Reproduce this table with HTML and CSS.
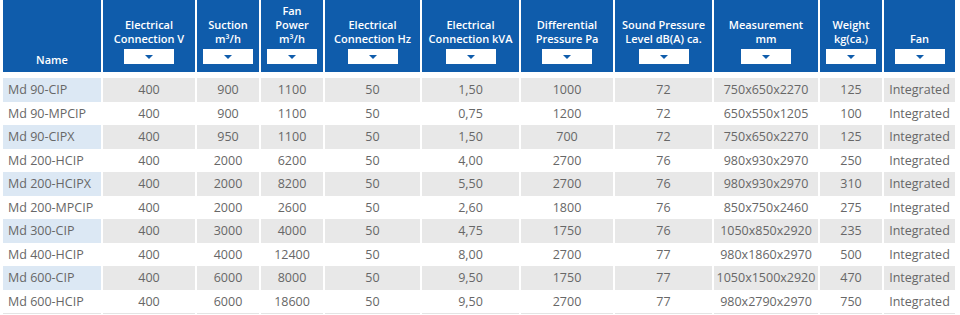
FILE: index.html
```html
<!DOCTYPE html>
<html lang="en">
<head>
<meta charset="utf-8">
<title>Product table</title>
<link rel="stylesheet" href="styles.css">
</head>
<body>
<div class="wrap">
<table class="specs">
  <colgroup>
    <col class="c-name"><col class="c-v"><col class="c-s"><col class="c-fp"><col class="c-hz"><col class="c-kva"><col class="c-pa"><col class="c-db"><col class="c-mm"><col class="c-kg"><col class="c-fan">
  </colgroup>
  <thead>
    <tr>
      <th class="name-h">Name</th>
      <th><span class="lbl">Electrical<br>Connection V</span><span class="sel"><span class="tri"></span></span></th>
      <th><span class="lbl">Suction<br>m³/h</span><span class="sel"><span class="tri"></span></span></th>
      <th><span class="lbl">Fan<br>Power<br>m³/h</span><span class="sel"><span class="tri"></span></span></th>
      <th><span class="lbl">Electrical<br>Connection Hz</span><span class="sel"><span class="tri"></span></span></th>
      <th><span class="lbl">Electrical<br>Connection kVA</span><span class="sel"><span class="tri"></span></span></th>
      <th><span class="lbl">Differential<br>Pressure Pa</span><span class="sel"><span class="tri"></span></span></th>
      <th><span class="lbl">Sound Pressure<br>Level dB(A) ca.</span><span class="sel"><span class="tri"></span></span></th>
      <th><span class="lbl">Measurement<br>mm</span><span class="sel"><span class="tri"></span></span></th>
      <th><span class="lbl">Weight<br>kg(ca.)</span><span class="sel"><span class="tri"></span></span></th>
      <th><span class="lbl">Fan</span><span class="sel"><span class="tri"></span></span></th>
    </tr>
  </thead>
  <tbody>
    <tr class="odd first"><td>Md 90-CIP</td><td>400</td><td>900</td><td>1100</td><td>50</td><td>1,50</td><td>1000</td><td>72</td><td>750x650x2270</td><td>125</td><td>Integrated</td></tr>
    <tr><td>Md 90-MPCIP</td><td>400</td><td>900</td><td>1100</td><td>50</td><td>0,75</td><td>1200</td><td>72</td><td>650x550x1205</td><td>100</td><td>Integrated</td></tr>
    <tr class="odd"><td>Md 90-CIPX</td><td>400</td><td>950</td><td>1100</td><td>50</td><td>1,50</td><td>700</td><td>72</td><td>750x650x2270</td><td>125</td><td>Integrated</td></tr>
    <tr><td>Md 200-HCIP</td><td>400</td><td>2000</td><td>6200</td><td>50</td><td>4,00</td><td>2700</td><td>76</td><td>980x930x2970</td><td>250</td><td>Integrated</td></tr>
    <tr class="odd"><td>Md 200-HCIPX</td><td>400</td><td>2000</td><td>8200</td><td>50</td><td>5,50</td><td>2700</td><td>76</td><td>980x930x2970</td><td>310</td><td>Integrated</td></tr>
    <tr><td>Md 200-MPCIP</td><td>400</td><td>2000</td><td>2600</td><td>50</td><td>2,60</td><td>1800</td><td>76</td><td>850x750x2460</td><td>275</td><td>Integrated</td></tr>
    <tr class="odd"><td>Md 300-CIP</td><td>400</td><td>3000</td><td>4000</td><td>50</td><td>4,75</td><td>1750</td><td>76</td><td>1050x850x2920</td><td>235</td><td>Integrated</td></tr>
    <tr><td>Md 400-HCIP</td><td>400</td><td>4000</td><td>12400</td><td>50</td><td>8,00</td><td>2700</td><td>77</td><td>980x1860x2970</td><td>500</td><td>Integrated</td></tr>
    <tr class="odd"><td>Md 600-CIP</td><td>400</td><td>6000</td><td>8000</td><td>50</td><td>9,50</td><td>1750</td><td>77</td><td>1050x1500x2920</td><td>470</td><td>Integrated</td></tr>
    <tr class="last"><td>Md 600-HCIP</td><td>400</td><td>6000</td><td>18600</td><td>50</td><td>9,50</td><td>2700</td><td>77</td><td>980x2790x2970</td><td>750</td><td>Integrated</td></tr>
  </tbody>
</table>
</div>
</body>
</html>
```

FILE: styles.css
```css
html, body {
  margin: 0;
  padding: 0;
  background: #fff;
}

.wrap {
  padding-left: 1px;
}

.specs {
  border-collapse: separate;
  border-spacing: 2px 0;
  table-layout: fixed;
  width: 955px;
  font-family: "Open Sans", "Liberation Sans", sans-serif;
}

.c-name { width: 98px; }
.c-v { width: 92px; }
.c-s { width: 62px; }
.c-fp { width: 62px; }
.c-hz { width: 95px; }
.c-kva { width: 97px; }
.c-pa { width: 92px; }
.c-db { width: 97px; }
.c-mm { width: 104px; }
.c-kg { width: 62px; }
.c-fan { width: 71px; }

.specs th {
  background: #0f5cab;
  color: #fff;
  font-size: 11px;
  font-weight: 600;
  line-height: 14px;
  height: 72px;
  box-sizing: border-box;
  padding: 0 2px 8px;
  vertical-align: bottom;
  text-align: center;
}

.specs th.name-h {
  padding-bottom: 5px;
}

.lbl {
  display: block;
  white-space: nowrap;
}

.sel {
  display: flex;
  align-items: center;
  justify-content: center;
  width: 50px;
  height: 15px;
  margin: 3px auto 0;
  background: #fff;
}

.tri {
  width: 0;
  height: 0;
  border-left: 4px solid transparent;
  border-right: 4px solid transparent;
  border-top: 4px solid #0f5cab;
  margin-top: 1px;
}

.specs td {
  height: 23.5px;
  box-sizing: border-box;
  padding: 0 2px;
  font-size: 12.5px;
  color: #676767;
  text-align: center;
  vertical-align: middle;
  white-space: nowrap;
  background-clip: padding-box;
}

.specs td:first-child {
  text-align: left;
  padding-left: 5px;
}

.specs tr.odd td {
  background-color: #e8e8e8;
}

.specs tr.odd td:first-child {
  background-color: #dce8f4;
}

.specs tr.first td {
  border-top: 6px solid #fff;
  height: 29.5px;
}

.specs tr.last td {
  border-bottom: 1px solid #e4e4e4;
  height: 24.5px;
}
```
